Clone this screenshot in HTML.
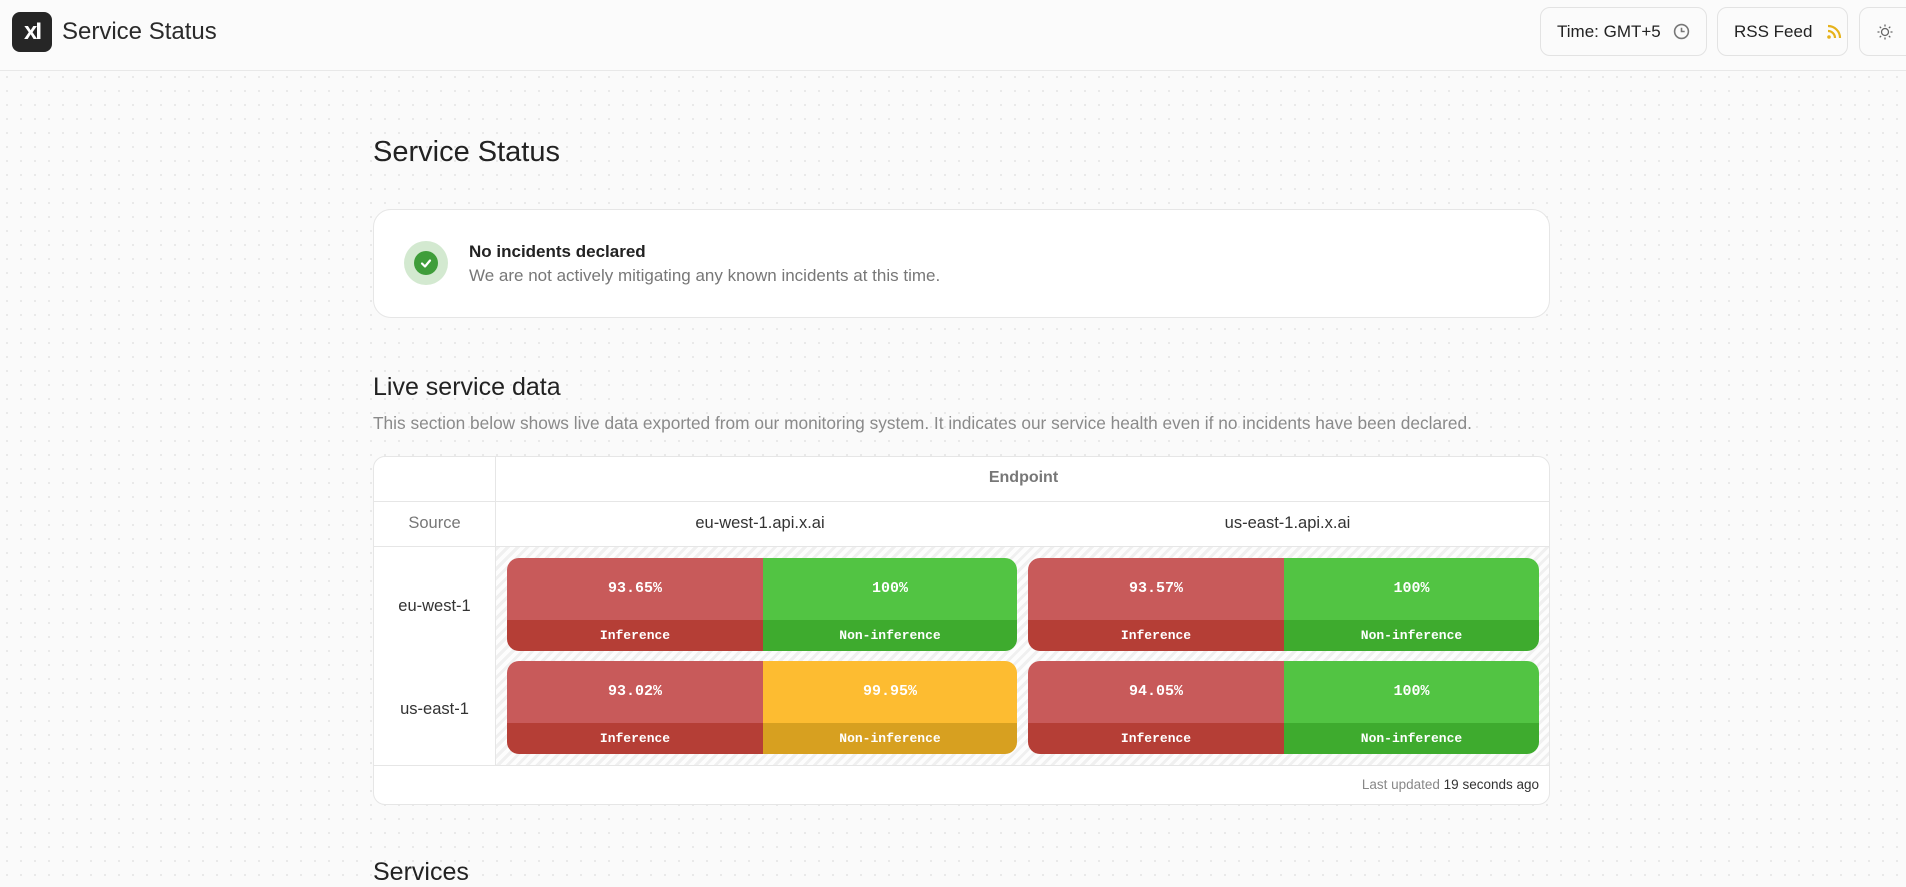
<!DOCTYPE html>
<html><head><meta charset="utf-8"><style>
*{box-sizing:border-box;margin:0;padding:0}
body{width:1906px;height:883px;overflow:hidden;font-family:"Liberation Sans",sans-serif;color:#222;background:#fafafa;background-image:radial-gradient(circle,#e8e8e8 1px,transparent 1.2px);background-size:14px 14px;position:relative}
.hdr{position:absolute;left:0;top:0;width:1906px;height:71px;background:#fbfbfb;border-bottom:1px solid #e8e8e8}
.logo{position:absolute;left:12px;top:12px;width:40px;height:40px;background:#262626;border-radius:8px;color:#fff;font-weight:bold;font-size:24px;text-align:center;line-height:40px;letter-spacing:-2px}
.ttl{position:absolute;left:62px;top:18px;font-size:24px;color:#2a2a2a}
.btn{position:absolute;top:7px;height:49px;border:1px solid #e3e3e3;border-radius:10px;background:#fbfbfb;font-size:17px;color:#222;display:flex;align-items:center;padding-left:16px}
.a{position:absolute}
h1{position:absolute;left:373px;top:136px;font-size:29px;font-weight:normal;color:#222}
.card{position:absolute;left:373px;width:1177px;background:#fff;border:1px solid #e6e6e6}
.cell{position:absolute;border-radius:12px;overflow:hidden;font-family:"Liberation Mono",monospace;color:#fff;font-weight:bold}
.cell div{position:absolute;text-align:center}
</style></head><body>
<div class="hdr">
<div class="logo">xI</div>
<div class="ttl">Service Status</div>
<div class="btn" style="left:1540px;width:167px">Time: GMT+5
<svg style="margin-left:12px" width="17" height="17" viewBox="0 0 16 16"><circle cx="8" cy="8" r="6.5" fill="none" stroke="#777" stroke-width="1.5"/><path d="M8 4.5V8h3" fill="none" stroke="#777" stroke-width="1.5"/></svg></div>
<div class="btn" style="left:1717px;width:131px">RSS Feed
<svg style="margin-left:14px" width="16" height="16" viewBox="0 0 16 16"><circle cx="3" cy="13" r="1.8" fill="#e6b21b"/><path d="M2 7a7 7 0 0 1 7 7M2 2a12 12 0 0 1 12 12" fill="none" stroke="#e6b21b" stroke-width="2.2"/></svg></div>
<div class="btn" style="left:1859px;width:60px">
<svg width="18" height="18" viewBox="0 0 18 18" stroke="#666" fill="none" stroke-width="1.3"><circle cx="9" cy="9" r="3.5"/><path d="M9 1.5v2M9 14.5v2M1.5 9h2M14.5 9h2M3.7 3.7l1.4 1.4M12.9 12.9l1.4 1.4M3.7 14.3l1.4-1.4M12.9 5.1l1.4-1.4"/></svg></div>
</div>
<h1>Service Status</h1>
<div class="card" style="top:209px;height:109px;border-radius:18px">
<div class="a" style="left:30px;top:31px;width:44px;height:44px;border-radius:50%;background:#d3e9d0"></div>
<div class="a" style="left:40px;top:41px;width:24px;height:24px;border-radius:50%;background:#3f9d3a"></div>
<svg class="a" style="left:40px;top:41px" width="24" height="24" viewBox="0 0 24 24"><path d="M8 12.5l3 3 5-6" fill="none" stroke="#fff" stroke-width="2.2" stroke-linecap="round" stroke-linejoin="round"/></svg>
<div class="a" style="left:95px;top:32px;font-size:17px;font-weight:bold;color:#222">No incidents declared</div>
<div class="a" style="left:95px;top:56px;font-size:17px;color:#777">We are not actively mitigating any known incidents at this time.</div>
</div>
<div class="a" style="left:373px;top:373px;font-size:25px;color:#222">Live service data</div>
<div class="a" style="left:373px;top:413px;font-size:17.3px;color:#8a8a8a">This section below shows live data exported from our monitoring system. It indicates our service health even if no incidents have been declared.</div>
<div class="card" style="top:456px;height:349px;border-radius:12px;overflow:hidden">
<div class="a" style="left:121px;top:0;width:1px;height:309px;background:#e6e6e6"></div>
<div class="a" style="left:121px;top:44px;width:1056px;height:1px;background:#e6e6e6"></div>
<div class="a" style="left:0;top:44px;width:121px;height:1px;background:#e6e6e6"></div>
<div class="a" style="left:0;top:89px;width:1177px;height:1px;background:#e6e6e6"></div>
<div class="a" style="left:0;top:308px;width:1177px;height:1px;background:#e6e6e6"></div>
<div class="a" style="left:122px;top:90px;width:1055px;height:218px;background:repeating-linear-gradient(135deg,#f0f0f0 0 3px,#fdfdfd 3px 7px)"></div>
<div class="a" style="left:122px;top:12px;width:1055px;text-align:center;font-size:16px;color:#777;font-weight:bold">Endpoint</div>
<div class="a" style="left:0;top:57px;width:121px;text-align:center;font-size:16.5px;color:#777">Source</div>
<div class="a" style="left:122px;top:57px;width:528px;text-align:center;font-size:16.5px;color:#333">eu-west-1.api.x.ai</div>
<div class="a" style="left:650px;top:57px;width:527px;text-align:center;font-size:16.5px;color:#333">us-east-1.api.x.ai</div>
<div class="a" style="left:0;top:140px;width:121px;text-align:center;font-size:16.5px;color:#333">eu-west-1</div>
<div class="a" style="left:0;top:243px;width:121px;text-align:center;font-size:16.5px;color:#333">us-east-1</div>
<div class="a" style="right:10px;top:320px;font-size:13.5px;color:#888">Last updated <span style="color:#333">19 seconds ago</span></div>
</div>
<div class="cell" style="left:507px;top:558px;width:510px;height:93px">
<div style="left:0;top:0;width:256px;height:62px;background:#c85a5a;line-height:62px;font-size:15px">93.65%</div>
<div style="left:0;top:62px;width:256px;height:31px;background:#b53e36;line-height:31px;font-size:13px">Inference</div>
<div style="left:256px;top:0;width:254px;height:62px;background:#52c443;line-height:62px;font-size:15px">100%</div>
<div style="left:256px;top:62px;width:254px;height:31px;background:#3eab2e;line-height:31px;font-size:13px">Non-inference</div></div>
<div class="cell" style="left:1028px;top:558px;width:511px;height:93px">
<div style="left:0;top:0;width:256px;height:62px;background:#c85a5a;line-height:62px;font-size:15px">93.57%</div>
<div style="left:0;top:62px;width:256px;height:31px;background:#b53e36;line-height:31px;font-size:13px">Inference</div>
<div style="left:256px;top:0;width:255px;height:62px;background:#52c443;line-height:62px;font-size:15px">100%</div>
<div style="left:256px;top:62px;width:255px;height:31px;background:#3eab2e;line-height:31px;font-size:13px">Non-inference</div></div>
<div class="cell" style="left:507px;top:661px;width:510px;height:93px">
<div style="left:0;top:0;width:256px;height:62px;background:#c85a5a;line-height:62px;font-size:15px">93.02%</div>
<div style="left:0;top:62px;width:256px;height:31px;background:#b53e36;line-height:31px;font-size:13px">Inference</div>
<div style="left:256px;top:0;width:254px;height:62px;background:#fdbc31;line-height:62px;font-size:15px">99.95%</div>
<div style="left:256px;top:62px;width:254px;height:31px;background:#d7a020;line-height:31px;font-size:13px">Non-inference</div></div>
<div class="cell" style="left:1028px;top:661px;width:511px;height:93px">
<div style="left:0;top:0;width:256px;height:62px;background:#c85a5a;line-height:62px;font-size:15px">94.05%</div>
<div style="left:0;top:62px;width:256px;height:31px;background:#b53e36;line-height:31px;font-size:13px">Inference</div>
<div style="left:256px;top:0;width:255px;height:62px;background:#52c443;line-height:62px;font-size:15px">100%</div>
<div style="left:256px;top:62px;width:255px;height:31px;background:#3eab2e;line-height:31px;font-size:13px">Non-inference</div></div>
<div class="a" style="left:373px;top:858px;font-size:25px;color:#222">Services</div>
</body></html>
